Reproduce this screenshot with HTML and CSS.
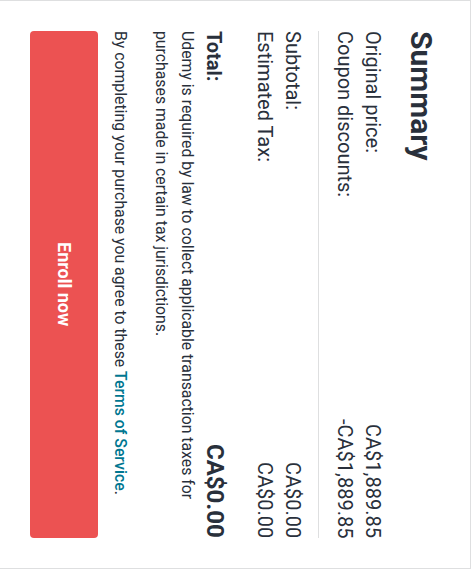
FILE: index.html
```html
<!DOCTYPE html>
<html lang="en">
<head>
<meta charset="utf-8">
<title>Summary</title>
<link rel="stylesheet" href="styles.css">
</head>
<body>
<div class="card">
  <h2 class="title">Summary</h2>
  <div class="rows first">
    <div class="row"><span>Original price:</span><span>CA$1,889.85</span></div>
    <div class="row"><span>Coupon discounts:</span><span>-CA$1,889.85</span></div>
  </div>
  <div class="divider"></div>
  <div class="rows">
    <div class="row"><span>Subtotal:</span><span>CA$0.00</span></div>
    <div class="row"><span>Estimated Tax:</span><span>CA$0.00</span></div>
  </div>
  <div class="row total"><span class="total-label">Total:</span><span class="total-value">CA$0.00</span></div>
  <p class="note">Udemy is required by law to collect applicable transaction taxes for purchases made in certain tax jurisdictions.</p>
  <p class="note terms">By completing your purchase you agree to these <a href="#" class="link">Terms of Service</a>.</p>
  <a href="#" class="enroll">Enroll now</a>
</div>
</body>
</html>
```
FILE: styles.css
```css
html, body {
  margin: 0;
  padding: 0;
  background: #ffffff;
}
body {
  writing-mode: vertical-rl;
  text-orientation: sideways;
  width: 471px;
  height: 569px;
  overflow: hidden;
  font-family: Roboto, "Noto Sans", sans-serif;
  color: #29303b;
}
.card {
  box-sizing: border-box;
  inline-size: 569px;
  block-size: 471px;
  border: 1px solid #dedfe0;
  border-block-end: 0;
  padding-block-start: 31px;
  padding-inline-start: 30px;
  padding-inline-end: 30px;
  display: flex;
  flex-direction: column;
}
.title {
  margin: 0;
  font-size: 30px;
  line-height: 36px;
  font-weight: 700;
}
.rows {
  display: flex;
  flex-direction: column;
}
.rows.first {
  margin-block-start: 16px;
}
.row {
  display: flex;
  justify-content: space-between;
  font-size: 20px;
  line-height: 28px;
}
.divider {
  border-block-start: 1px solid #dedfe0;
  margin-block: 12px 11px;
}
.total {
  margin-block-start: 22px;
  align-items: baseline;
  line-height: 28px;
  font-weight: 700;
}
.total-label {
  font-size: 20px;
}
.total-value {
  font-size: 24px;
}
.note {
  margin: 0;
  font-size: 15.8px;
  line-height: 25.6px;
}
.terms {
  margin-block-start: 16px;
}
.link {
  color: #007791;
  font-weight: 500;
  text-decoration: none;
}
.enroll {
  margin-block-start: 9px;
  block-size: 68px;
  border-radius: 4px;
  background: #ec5252;
  color: #ffffff;
  font-weight: 700;
  font-size: 18px;
  text-decoration: none;
  display: flex;
  align-items: center;
  justify-content: center;
}
```
